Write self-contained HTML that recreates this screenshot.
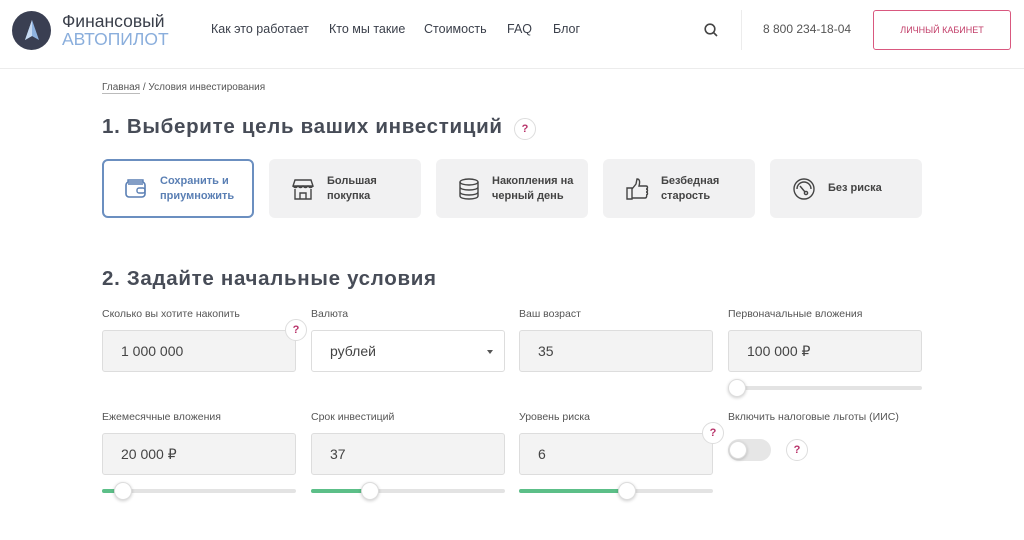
<!DOCTYPE html>
<html><head><meta charset="utf-8"><style>
*{box-sizing:border-box;margin:0;padding:0}
body{width:1024px;height:540px;overflow:hidden;background:#fff;font-family:"Liberation Sans","DejaVu Sans",sans-serif;color:#3a3f4a;position:relative}
.a{position:absolute}
.hdr{left:0;top:0;width:1024px;height:69px;border-bottom:1px solid #ececec}
.nav{font-size:12.5px;color:#3a3f4a;top:22px}
.card{width:152px;height:59px;top:159px;background:#f1f1f2;border-radius:6px;display:flex;align-items:center;padding-left:22px;font-size:11px;line-height:15px;color:#444;font-weight:bold}
.card svg{margin-right:12px;flex:none}
.lbl{font-size:10.5px;color:#555}
.inp{width:194px;height:42px;background:#f3f3f3;border:1px solid #ddd;border-radius:3px;font-size:14px;padding:12px 0 0 18px;color:#444}
.trk{height:4px;background:#e3e3e3;border-radius:2px}
.fill{height:4px;background:#5cbf88;border-radius:2px}
.knob{width:18px;height:18px;border-radius:50%;background:#fff;border:1px solid #ddd;box-shadow:0 1px 3px rgba(0,0,0,.2)}
.q{width:22px;height:22px;border-radius:50%;background:#fff;border:1px solid #ddd;color:#b8336a;font-size:11px;font-weight:bold;text-align:center;line-height:20px}
h2{font-size:20.5px;font-weight:bold;color:#474c57;letter-spacing:.7px}
</style></head><body>
<div class="a hdr"></div>
<svg class="a" style="left:12px;top:11px" width="39" height="39" viewBox="0 0 39 39"><circle cx="19.5" cy="19.5" r="19.5" fill="#3a3f52"/><path d="M20 9 L27 29 L20 25 L13 29 Z" fill="#8fb3e0"/><path d="M20 9 L20 25 L13 29Z" fill="#c7daf2"/></svg>
<div class="a" style="left:62px;top:11px;font-size:17.5px;color:#3a3f4a">Финансовый</div>
<div class="a" style="left:62px;top:29px;font-size:17.5px;color:#8aaedc">АВТОПИЛОТ</div>
<div class="a nav" style="left:211px">Как это работает</div>
<div class="a nav" style="left:329px">Кто мы такие</div>
<div class="a nav" style="left:424px">Стоимость</div>
<div class="a nav" style="left:507px">FAQ</div>
<div class="a nav" style="left:553px">Блог</div>
<svg class="a" style="left:704px;top:23px" width="14" height="14" viewBox="0 0 14 14"><circle cx="6" cy="6" r="4.8" fill="none" stroke="#444" stroke-width="1.6"/><path d="M9.5 9.5 L13 13" stroke="#444" stroke-width="1.6"/></svg>
<div class="a" style="left:741px;top:10px;width:1px;height:40px;background:#ececec"></div>
<div class="a nav" style="left:763px;font-size:12px;color:#555">8 800 234-18-04</div>
<div class="a" style="left:873px;top:10px;width:138px;height:40px;border:1px solid #d9587f;border-radius:3px;color:#c23d68;font-size:9px;text-align:center;line-height:38px">ЛИЧНЫЙ КАБИНЕТ</div>

<div class="a" style="left:102px;top:82px;font-size:10px;color:#555"><span style="border-bottom:1px solid #bbb">Главная</span> / Условия инвестирования</div>
<h2 class="a" style="left:102px;top:115px">1. Выберите цель ваших инвестиций</h2>
<div class="a q" style="left:514px;top:118px">?</div>

<div class="a card" style="left:102px;background:#fff;border:2px solid #6b8fc0;color:#5a7fb4;padding-left:20px"><svg width="24" height="22" viewBox="0 0 24 22"><rect x="2" y="4" width="19" height="15" rx="3" fill="none" stroke="#5a7fb4" stroke-width="1.6"/><path d="M4 4V2h15v2M4 6h15" stroke="#5a7fb4" stroke-width="1.4" fill="none"/><rect x="13" y="10" width="8" height="5" rx="2" fill="none" stroke="#5a7fb4" stroke-width="1.4"/></svg>Сохранить и<br>приумножить</div>
<div class="a card" style="left:269px"><svg width="24" height="24" viewBox="0 0 24 24" fill="none" stroke="#444" stroke-width="1.4"><path d="M4 3h16l2 6H2z M2 9q2.5 3 5 0q2.5 3 5 0q2.5 3 5 0q2.5 3 5 0"/><path d="M4 12v10h16V12M9 22v-6h6v6"/></svg>Большая<br>покупка</div>
<div class="a card" style="left:436px"><svg width="22" height="24" viewBox="0 0 22 24" fill="none" stroke="#444" stroke-width="1.4"><ellipse cx="11" cy="5" rx="9" ry="3"/><path d="M2 5v14c0 4 18 4 18 0V5M2 10c0 4 18 4 18 0M2 15c0 4 18 4 18 0"/></svg>Накопления на<br>черный день</div>
<div class="a card" style="left:603px"><svg width="24" height="24" viewBox="0 0 24 24" fill="none" stroke="#444" stroke-width="1.4"><path d="M2 11h5v11H2zM7 12l4-5 1-5c3 0 3 3 2 7h7c2 0 2 3 0 3 2 0 2 3 0 3 2 0 2 3 0 3 1 0 1 3-1 3H7"/></svg>Безбедная<br>старость</div>
<div class="a card" style="left:770px"><svg width="24" height="24" viewBox="0 0 24 24" fill="none" stroke="#444" stroke-width="1.4"><circle cx="12" cy="12" r="10"/><path d="M5 12a7 7 0 0 1 14 0"/><path d="M8 9l5 6"/><circle cx="14" cy="16" r="1.6"/></svg>Без риска</div>

<h2 class="a" style="left:102px;top:267px">2. Задайте начальные условия</h2>

<div class="a lbl" style="left:102px;top:308px">Сколько вы хотите накопить</div>
<div class="a lbl" style="left:311px;top:308px">Валюта</div>
<div class="a lbl" style="left:519px;top:308px">Ваш возраст</div>
<div class="a lbl" style="left:728px;top:308px">Первоначальные вложения</div>
<div class="a inp" style="left:102px;top:330px">1 000 000</div>
<div class="a q" style="left:285px;top:319px">?</div>
<div class="a inp" style="left:311px;top:330px;background:#fff">рублей</div>
<div class="a" style="left:487px;top:350px;border-left:3px solid transparent;border-right:3px solid transparent;border-top:4px solid #555"></div>
<div class="a inp" style="left:519px;top:330px">35</div>
<div class="a inp" style="left:728px;top:330px">100 000 ₽</div>
<div class="a trk" style="left:728px;top:386px;width:194px"></div>
<div class="a knob" style="left:728px;top:379px"></div>

<div class="a lbl" style="left:102px;top:411px">Ежемесячные вложения</div>
<div class="a lbl" style="left:311px;top:411px">Срок инвестиций</div>
<div class="a lbl" style="left:519px;top:411px">Уровень риска</div>
<div class="a lbl" style="left:728px;top:411px">Включить налоговые льготы (ИИС)</div>
<div class="a inp" style="left:102px;top:433px">20 000 ₽</div>
<div class="a inp" style="left:311px;top:433px">37</div>
<div class="a inp" style="left:519px;top:433px">6</div>
<div class="a q" style="left:702px;top:422px">?</div>
<div class="a" style="left:728px;top:439px;width:43px;height:22px;border-radius:11px;background:#e6e6e6"></div>
<div class="a knob" style="left:729px;top:441px"></div>
<div class="a q" style="left:786px;top:439px">?</div>

<div class="a trk" style="left:102px;top:489px;width:194px"></div>
<div class="a fill" style="left:102px;top:489px;width:20px"></div>
<div class="a knob" style="left:114px;top:482px"></div>
<div class="a trk" style="left:311px;top:489px;width:194px"></div>
<div class="a fill" style="left:311px;top:489px;width:58px"></div>
<div class="a knob" style="left:361px;top:482px"></div>
<div class="a trk" style="left:519px;top:489px;width:194px"></div>
<div class="a fill" style="left:519px;top:489px;width:108px"></div>
<div class="a knob" style="left:618px;top:482px"></div>
</body></html>
